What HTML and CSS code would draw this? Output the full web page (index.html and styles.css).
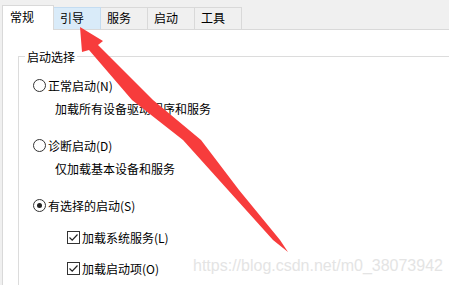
FILE: index.html
```html
<!DOCTYPE html>
<html lang="zh-CN">
  <head>
    <meta charset="UTF-8" />
    <title>系统配置</title>
    <link rel="stylesheet" href="styles.css">
  </head>
  <body>
    <div class="dialog">
      <div class="tabs">
        <div class="tab active">常规</div>
        <div class="tab hover">引导</div>
        <div class="tab">服务</div>
        <div class="tab">启动</div>
        <div class="tab">工具</div>
      </div>

      <div class="panel">
        <fieldset class="group">
          <legend>启动选择</legend>

          <div class="option">
            <label class="radio-row"><span class="radio"></span>正常启动(N)</label>
            <p class="desc">加载所有设备驱动程序和服务</p>
          </div>

          <div class="option">
            <label class="radio-row"><span class="radio"></span>诊断启动(D)</label>
            <p class="desc">仅加载基本设备和服务</p>
          </div>

          <div class="option">
            <label class="radio-row"><span class="radio checked"></span>有选择的启动(S)</label>
            <div class="checks">
              <label class="check-row">
                <span class="checkbox"><svg width="11" height="11" viewBox="0 0 11 11"><path d="M1.5 5.5 L4.2 8.2 L9.5 2.5" fill="none" stroke="#222" stroke-width="1.2"/></svg></span>加载系统服务(L)
              </label>
              <label class="check-row">
                <span class="checkbox"><svg width="11" height="11" viewBox="0 0 11 11"><path d="M1.5 5.5 L4.2 8.2 L9.5 2.5" fill="none" stroke="#222" stroke-width="1.2"/></svg></span>加载启动项(O)
              </label>
            </div>
          </div>
        </fieldset>
      </div>

      <!-- annotation drawn over the screenshot -->
      <svg class="arrow" width="449" height="285" viewBox="0 0 449 285">
        <polygon fill="#f73c3c" points="80,27 103,41 98,45 153,100 201,140 239,190 280,240 288,252 273,240 228,190 183,140 132,100 89,50 82,52"/>
      </svg>
      <div class="watermark">https://blog.csdn.net/m0_38073942</div>
    </div>
  </body>
</html>
```

FILE: styles.css
```css
body {
  margin: 0;
  background: #f0f0f0;
  font-family: "Microsoft YaHei UI", "Noto Sans CJK SC", sans-serif;
  font-size: 12px;
  color: #000;
  overflow: hidden;
}

.dialog {
  position: relative;
  box-sizing: border-box;
  width: 449px;
  height: 285px;
  padding-top: 5px;
  overflow: hidden;
}

.tabs {
  display: flex;
  align-items: flex-end;
  height: 24px;
  margin-left: 2px;
}

.tab {
  box-sizing: border-box;
  width: 47px;
  height: 22px;
  padding-left: 6px;
  line-height: 19px;
  border-top: 1px solid #d9d9d9;
  border-right: 1px solid #d9d9d9;
}

.tab.active {
  position: relative;
  z-index: 1;
  width: 52px;
  height: 25px;
  margin-bottom: -1px;
  padding: 1px 0 0 7px;
  background: #fff;
  border-left: 1px solid #d9d9d9;
  line-height: 20px;
}

.tab.hover {
  background: #d9ebf9;
  border-top-color: #c4dcf1;
  border-right-color: #c4dcf1;
}

.panel {
  height: 256px;
  margin-left: 2px;
  padding: 18px 0 0 15px;
  background: #fff;
  border-top: 1px solid #d9d9d9;
  border-left: 1px solid #d9d9d9;
  overflow: hidden;
}

.group {
  width: 460px;
  height: 240px;
  margin: 0;
  padding: 12px 0 0 6px;
  border: 1px solid #dcdcdc;
}

.group legend {
  padding: 0 2px;
  line-height: 17px;
}

.option {
  display: flex;
  flex-direction: column;
  gap: 6px;
  margin-bottom: 20px;
}

.radio-row,
.check-row {
  display: flex;
  align-items: center;
  height: 17px;
  line-height: 17px;
}

.radio-row {
  margin-left: 8px;
}

.radio {
  box-sizing: border-box;
  display: flex;
  align-items: center;
  justify-content: center;
  width: 13px;
  height: 13px;
  margin-right: 2px;
  border: 1px solid #333;
  border-radius: 50%;
  background: #fff;
}

.radio.checked::after {
  content: "";
  width: 5px;
  height: 5px;
  border-radius: 50%;
  background: #222;
}

.desc {
  margin: 0 0 0 30px;
  line-height: 17px;
}

.checks {
  display: flex;
  flex-direction: column;
  gap: 14px;
  margin-top: 9px;
}

.check-row {
  margin-left: 42px;
}

.checkbox {
  box-sizing: border-box;
  display: flex;
  align-items: center;
  justify-content: center;
  width: 13px;
  height: 13px;
  margin-right: 2px;
  border: 1px solid #333;
  background: #fff;
}

.arrow {
  position: absolute;
  top: 0;
  left: 0;
  pointer-events: none;
}

.watermark {
  position: absolute;
  left: 193px;
  top: 257px;
  font-family: "Liberation Sans", Arial, sans-serif;
  font-size: 16px;
  line-height: 18px;
  color: #e4e4e4;
}
```
